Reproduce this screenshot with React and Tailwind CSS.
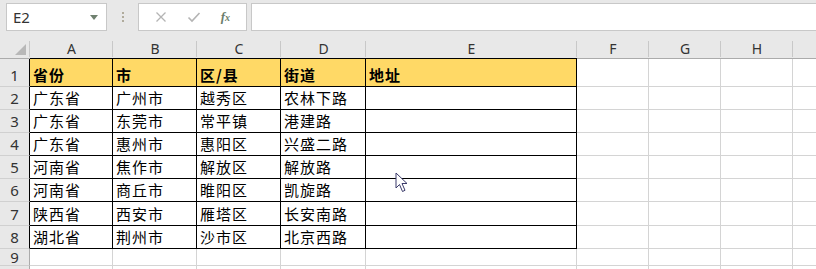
const COLS = [
  { key: 'A', w: 83 },
  { key: 'B', w: 84 },
  { key: 'C', w: 84 },
  { key: 'D', w: 85 },
  { key: 'E', w: 211 },
  { key: 'F', w: 72 },
  { key: 'G', w: 72 },
  { key: 'H', w: 72 },
  { key: 'I', w: 60 },
];

const DATA = [
  ['省份', '市', '区/县', '街道', '地址'],
  ['广东省', '广州市', '越秀区', '农林下路', ''],
  ['广东省', '东莞市', '常平镇', '港建路', ''],
  ['广东省', '惠州市', '惠阳区', '兴盛二路', ''],
  ['河南省', '焦作市', '解放区', '解放路', ''],
  ['河南省', '商丘市', '睢阳区', '凯旋路', ''],
  ['陕西省', '西安市', '雁塔区', '长安南路', ''],
  ['湖北省', '荆州市', '沙市区', '北京西路', ''],
  ['', '', '', '', ''],
  ['', '', '', '', ''],
];

const CJK = { fontFamily: '"Noto Sans CJK SC", "Noto Sans", sans-serif' };
const UI = { fontFamily: '"Noto Sans", "Open Sans", sans-serif' };

function Toolbar() {
  return (
    <div className="h-[40px] bg-[#e8e8e8] flex items-start pt-[3px] pl-[6px]">
      {/* name box */}
      <div className="w-[101px] h-[28px] bg-white border border-[#c8c8c8] flex items-center justify-between px-[6px]">
        <span className="text-[15px] text-[#333]" style={UI}>E2</span>
        <span className="w-0 h-0 border-l-[4px] border-r-[4px] border-t-[5px] border-l-transparent border-r-transparent border-t-[#6f806f] mr-[2px]" />
      </div>
      <div className="w-[31px] h-[28px] flex flex-col items-center justify-center gap-[2px]">
        <span className="w-[2px] h-[2px] bg-[#b0ab9c]" />
        <span className="w-[2px] h-[2px] bg-[#b0ab9c]" />
        <span className="w-[2px] h-[2px] bg-[#b0ab9c]" />
      </div>
      {/* cancel / enter / fx */}
      <div className="w-[109px] h-[28px] bg-white border border-[#c8c8c8] flex items-center justify-around px-[6px]">
        <svg width="12" height="12" viewBox="0 0 12 12" className="stroke-[#b4b4b4]">
          <path d="M1.5 1.5 L10.5 10.5 M10.5 1.5 L1.5 10.5" strokeWidth="1.3" fill="none" />
        </svg>
        <svg width="14" height="12" viewBox="0 0 14 12" className="stroke-[#b4b4b4]">
          <path d="M1.5 6.5 L5 10 L12.5 2" strokeWidth="1.6" fill="none" />
        </svg>
        <span className="text-[13px] italic text-[#6b7d6b] font-semibold" style={{ fontFamily: '"Liberation Serif", serif' }}>
          f<span className="text-[10px]">x</span>
        </span>
      </div>
      <div className="ml-[4px] flex-1 h-[28px] bg-white border border-[#c8c8c8] border-r-0" />
    </div>
  );
}

function ColumnHeader() {
  return (
    <div className="flex h-[19px] bg-[#e8e8e8]">
      <div className="w-[30px] shrink-0 relative border-b border-[#ababab]">
        <svg width="12" height="11" viewBox="0 0 12 11" className="absolute left-[15px] top-[4px]">
          <path d="M11 0 L11 11 L0 11 Z" fill="#b8b8b8" />
        </svg>
      </div>
      {COLS.map((c, i) => (
        <div
          key={c.key}
          style={{ width: c.w, ...UI }}
          className={`shrink-0 flex items-end justify-center text-[14px] leading-[18px] text-[#333] border-b ${i < 5 ? 'border-b-black' : 'border-b-[#ababab]'} relative`}
        >
          <span className="absolute left-[-1px] top-[1px] bottom-[1px] w-px bg-[#c8c8c8]" />
          {c.key === 'I' ? '' : c.key}
        </div>
      ))}
    </div>
  );
}

function Row({ num, cells, height }) {
  const inTable = num <= 8;
  return (
    <div className="flex" style={{ height }}>
      <div
        className={`w-[30px] shrink-0 bg-[#e8e8e8] border-b border-b-[#d0d0d0] border-r ${inTable ? 'border-r-black' : 'border-r-[#ababab]'} flex items-end justify-center text-[15px] ${num === 9 ? 'leading-[15px]' : 'leading-[20px] pb-[1px]'} text-[#333]`}
        style={UI}
      >
        {num <= 9 ? num : ''}
      </div>
      {COLS.map((c, i) => {
        const tableCell = inTable && i < 5;
        const nextRowInTable = num < 8 && i < 5;
        const rightBlack = inTable && i < 5;
        const text = cells[i] || '';
        return (
          <div
            key={c.key}
            style={{ width: c.w, ...CJK }}
            className={`shrink-0 flex items-end pl-[3px] pb-[1px] text-[15px] leading-[20px] tracking-[1px] text-black border-r border-b whitespace-nowrap
              ${num === 1 && i < 5 ? 'bg-[#ffd966] font-bold' : 'bg-white'}
              ${rightBlack ? 'border-r-black' : 'border-r-[#d4d4d4]'}
              ${tableCell || nextRowInTable ? 'border-b-black' : 'border-b-[#d4d4d4]'}`}
          >
            {text}
          </div>
        );
      })}
    </div>
  );
}

function Pointer() {
  return (
    <svg width="14" height="21" viewBox="0 0 14 21" className="absolute left-[395px] top-[172px]">
      <path
        d="M1 1 L1 16 L4.5 12.5 L7.5 19.5 L10 18.3 L7 11.5 L12 11.5 Z"
        fill="white"
        stroke="#3a3a6a"
        strokeWidth="1"
        strokeLinejoin="round"
      />
    </svg>
  );
}

const ROW_H = [28, 23, 23, 23, 23, 23, 24, 23, 17, 23];

export default function App() {
  return (
    <div className="relative w-[816px] h-[269px] overflow-hidden bg-white select-none">
      <Toolbar />
      <ColumnHeader />
      {DATA.map((row, idx) => (
        <Row key={idx} num={idx + 1} cells={row} height={ROW_H[idx]} />
      ))}
      <Pointer />
    </div>
  );
}
